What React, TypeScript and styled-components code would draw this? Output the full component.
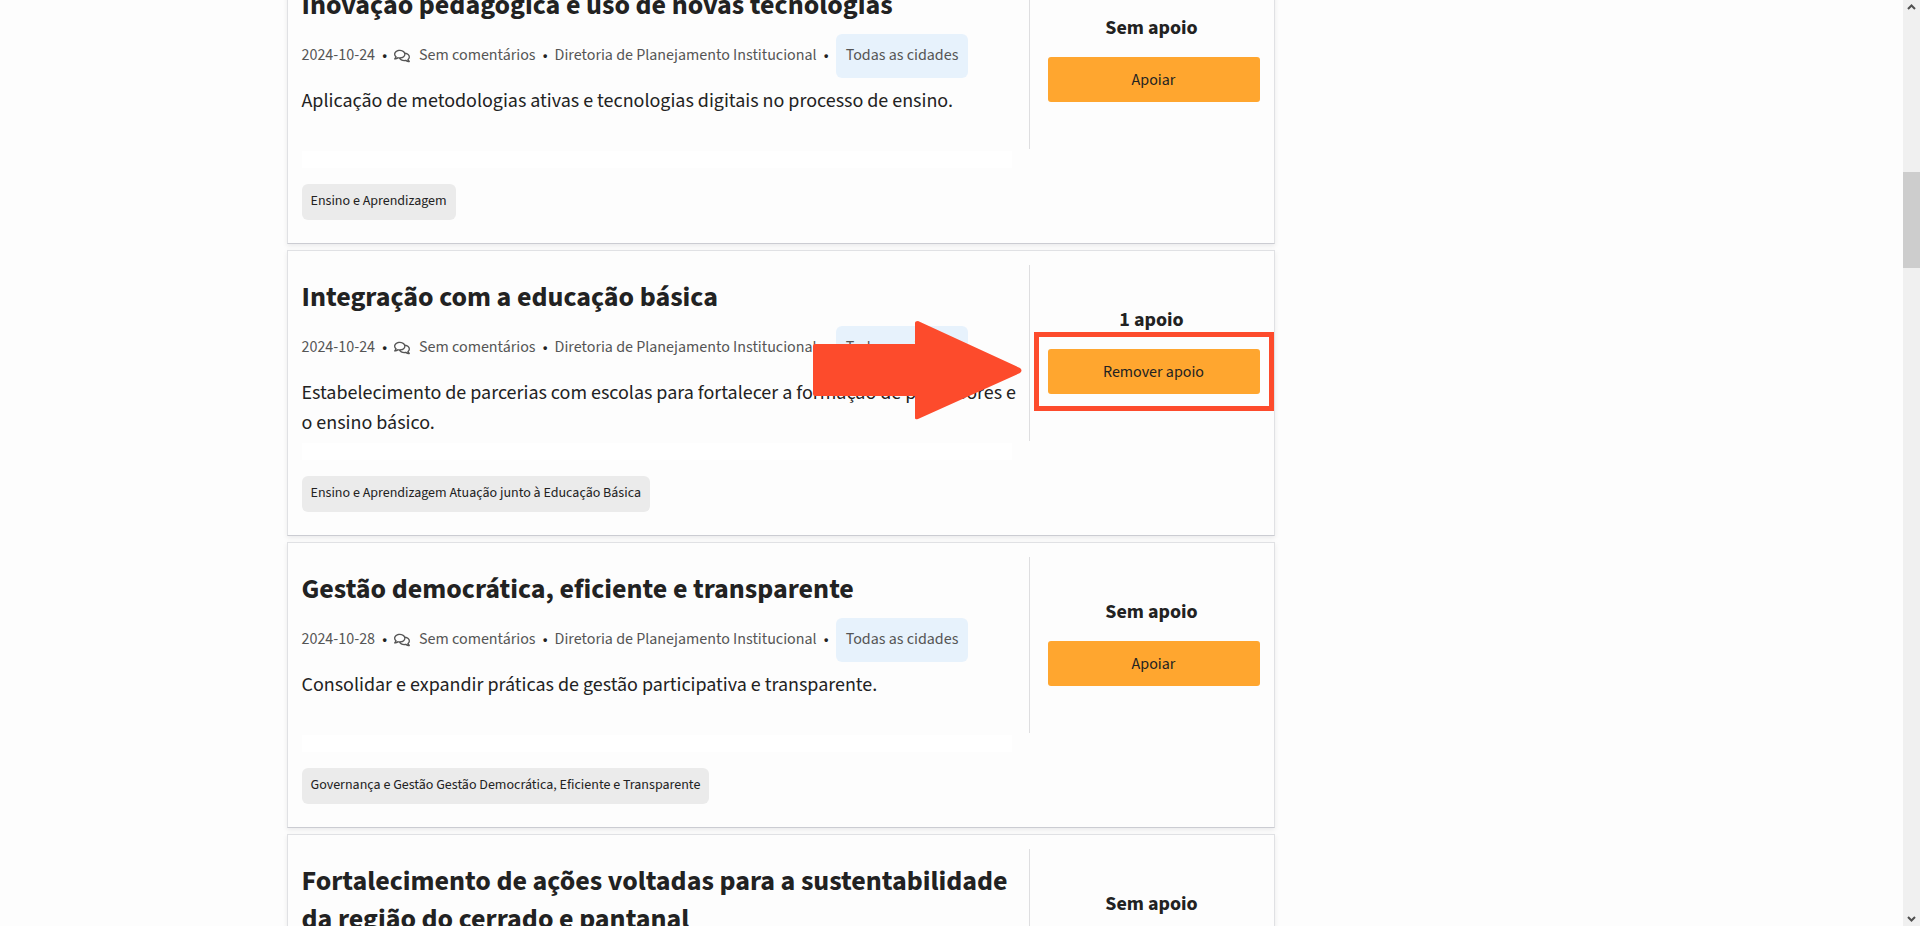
import React from "react";
import styled, { createGlobalStyle } from "styled-components";
import { FaRegComments } from "react-icons/fa";

const GlobalStyle = createGlobalStyle`
  * { box-sizing: border-box; }
  body {
    margin: 0;
    background: #fdfdfd;
    color: #222;
    font-family: "Source Sans 3", "Source Sans Pro", "Noto Sans CJK SC", sans-serif;
    font-size: 16px;
    line-height: 24px;
  }
`;

const Page = styled.div`
  display: flex;
  height: 100vh;
  overflow: hidden;
`;

const Viewport = styled.main`
  flex: 1;
  min-width: 0;
  overflow: hidden;
`;

const Container = styled.div`
  width: 100%;
  max-width: 1330px;
  margin: 0 auto;
`;

const List = styled.section`
  display: flex;
  flex-direction: column;
  gap: 6px;
  max-width: 988px;
  margin-top: -42px;
`;

const Card = styled.article`
  position: relative;
  min-height: 286px;
  padding: 14px 0 23px 14px;
  border: 1px solid #e0e1e4;
  border-bottom-color: #cbccd2;
  background: #fdfdfd;
  box-shadow: 0 2px 5px rgba(10, 10, 20, 0.08);
`;

const CardBody = styled.div`
  display: grid;
  grid-template-columns: minmax(0, 1fr) 245px;
`;

const Content = styled.div`
  min-height: 176px;
  padding: 13px 10px 0 0;
`;

const Title = styled.h2`
  margin: 0;
  font-size: 28px;
  line-height: 38px;
  font-weight: 700;
`;

const Meta = styled.div`
  display: flex;
  align-items: center;
  margin-top: 10px;
  color: #555;
`;

const Bullet = styled.span`
  width: 19px;
  padding-bottom: 2px;
  text-align: center;
  color: #222;
`;

const MetaText = styled.span`
  padding-bottom: 2px;
  white-space: nowrap;
`;

const Comments = styled.a`
  display: flex;
  align-items: center;
  gap: 9px;
  color: inherit;
  text-decoration: none;
`;

const City = styled.a`
  padding: 9px 10px 11px;
  border-radius: 6px;
  background: #e7f2fc;
  color: inherit;
  text-decoration: none;
  white-space: nowrap;
`;

const Description = styled.p`
  margin: 8px 0 0;
  font-size: 20px;
  line-height: 30px;
`;

const Support = styled.aside`
  display: flex;
  flex-direction: column;
  padding: 40px 14px 0 18px;
  border-left: 1px solid #dedee0;
`;

const SupportCount = styled.strong`
  margin: 0 4px 14px 0;
  font-size: 20px;
  line-height: 30px;
  text-align: center;
`;

const SupportButton = styled.button`
  height: 45px;
  padding: 0;
  border: 0;
  border-radius: 3px;
  background: #ffa62f;
  color: #222;
  font: inherit;
  cursor: pointer;
`;

const Fade = styled.div`
  height: 17px;
  margin: 2px 262px 0 0;
  background: #fff;
`;

const Tag = styled.a`
  display: block;
  width: fit-content;
  margin-top: 16px;
  padding: 9px 9px 11px;
  border-radius: 6px;
  background: #ebebeb;
  color: #222;
  font-size: 14px;
  line-height: 16px;
  text-decoration: none;
`;

const Highlight = styled.div`
  position: absolute;
  top: 81px;
  right: 0;
  width: 240px;
  height: 79px;
  border: 5px solid #fd4b2c;
  pointer-events: none;
`;

const Arrow = styled.svg`
  position: absolute;
  top: 70px;
  right: 252px;
  pointer-events: none;
`;

const Scrollbar = styled.div`
  display: flex;
  flex-direction: column;
  width: 17px;
  background: #f0f0f0;
  color: #505050;
`;

const ScrollArrow = styled.svg`
  flex: none;
`;

const Track = styled.div<{ $share: number }>`
  flex: ${(p) => p.$share};
`;

const Thumb = styled(Track)`
  background: #cdcdcd;
`;

interface Proposal {
  title: string;
  date: string;
  text: string;
  tag: string;
  supports: string;
  supported?: boolean;
}

const proposals: Proposal[] = [
  {
    title: "Inovação pedagógica e uso de novas tecnologias",
    date: "2024-10-24",
    text: "Aplicação de metodologias ativas e tecnologias digitais no processo de ensino.",
    tag: "Ensino e Aprendizagem",
    supports: "Sem apoio",
  },
  {
    title: "Integração com a educação básica",
    date: "2024-10-24",
    text: "Estabelecimento de parcerias com escolas para fortalecer a formação de professores e o ensino básico.",
    tag: "Ensino e Aprendizagem Atuação junto à Educação Básica",
    supports: "1 apoio",
    supported: true,
  },
  {
    title: "Gestão democrática, eficiente e transparente",
    date: "2024-10-28",
    text: "Consolidar e expandir práticas de gestão participativa e transparente.",
    tag: "Governança e Gestão Gestão Democrática, Eficiente e Transparente",
    supports: "Sem apoio",
  },
  {
    title: "Fortalecimento de ações voltadas para a sustentabilidade da região do cerrado e pantanal",
    date: "2024-10-28",
    text: "",
    tag: "",
    supports: "Sem apoio",
  },
];

function ProposalCard({ title, date, text, tag, supports, supported }: Proposal) {
  return (
    <Card>
      <CardBody>
        <Content>
          <Title>{title}</Title>
          <Meta>
            <MetaText>{date}</MetaText>
            <Bullet>•</Bullet>
            <Comments href="#comentarios">
              <FaRegComments size={16} aria-hidden />
              <MetaText>Sem comentários</MetaText>
            </Comments>
            <Bullet>•</Bullet>
            <MetaText>Diretoria de Planejamento Institucional</MetaText>
            <Bullet>•</Bullet>
            <City href="#cidades">Todas as cidades</City>
          </Meta>
          {text && <Description>{text}</Description>}
        </Content>
        <Support>
          <SupportCount>{supports}</SupportCount>
          <SupportButton type="button">{supported ? "Remover apoio" : "Apoiar"}</SupportButton>
        </Support>
      </CardBody>
      <Fade />
      {tag && <Tag href="#categoria">{tag}</Tag>}
      {supported && (
        <>
          <Arrow width="209" height="99" viewBox="0 0 209 99" aria-hidden>
            <path
              d="M2 23H102V2Q102 0 105 0L207 47Q210 49.5 207 52L105 98Q102 99 102 97V75H2Q0 75 0 73V25Q0 23 2 23Z"
              fill="#fd4b2c"
            />
          </Arrow>
          <Highlight />
        </>
      )}
    </Card>
  );
}

export default function App() {
  return (
    <>
      <GlobalStyle />
      <Page>
        <Viewport>
          <Container>
            <List>
              {proposals.map((p) => (
                <ProposalCard key={p.title} {...p} />
              ))}
            </List>
          </Container>
        </Viewport>
        <Scrollbar aria-hidden>
          <ScrollArrow width="17" height="17" viewBox="0 0 17 17">
            <path d="M5 9L8.500 5.500L12 9" fill="none" stroke="currentColor" strokeWidth="2" />
          </ScrollArrow>
          <Track $share={155} />
          <Thumb $share={96} />
          <Track $share={641} />
          <ScrollArrow width="17" height="17" viewBox="0 0 17 17">
            <path d="M5 8L8.500 11.500L12 8" fill="none" stroke="currentColor" strokeWidth="2" />
          </ScrollArrow>
        </Scrollbar>
      </Page>
    </>
  );
}
